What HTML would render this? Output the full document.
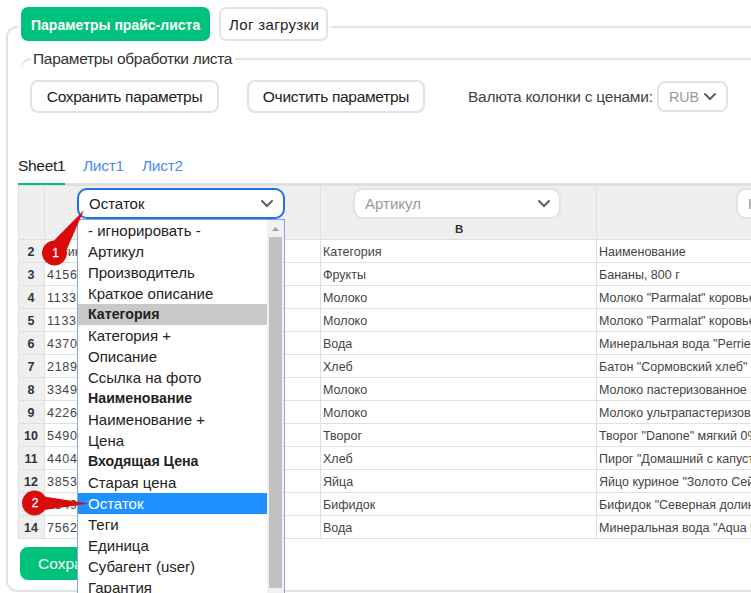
<!DOCTYPE html>
<html><head><meta charset="utf-8">
<style>
*{box-sizing:border-box;margin:0;padding:0}
html,body{width:751px;height:593px;overflow:hidden;background:#fff;font-family:"Liberation Sans",sans-serif;color:#333;position:relative}
.a{position:absolute;white-space:nowrap}
.outer{left:6px;top:26px;width:900px;height:566px;border:2px solid #e2e3e6;border-radius:11px}
.tabmask{left:18px;top:20px;width:313px;height:12px;background:#fff}
.gtab{left:21px;top:7px;width:189px;height:34px;background:#00c27c;border-radius:7px;color:#fff;font-weight:bold;font-size:14px;line-height:36px;padding-left:10px}
.wtab{left:219px;top:7px;width:109px;height:34px;border:2px solid #e2e3e6;border-radius:7px;font-size:15px;letter-spacing:0.35px;line-height:32px;padding-left:8px;color:#222}
.legline{left:235px;top:58px;width:600px;height:2px;background:#e2e3e6}
.legarc{left:20px;top:58px;width:11px;height:11px;border-top:2px solid #dddee2;border-left:2px solid #dddee2;border-top-left-radius:11px;-webkit-mask-image:linear-gradient(to bottom,#000 10%,transparent 95%)}
.legend{left:33px;top:49px;font-size:15.5px;letter-spacing:-0.3px;line-height:20px;color:#333}
.btn{height:33px;border:2px solid #e2e3e6;border-radius:8px;font-size:15.5px;letter-spacing:-0.3px;line-height:29px;color:#222;text-align:center}
.sheet{top:156px;font-size:15.5px;letter-spacing:-0.3px;line-height:20px}
.grid{left:18px;top:183px;width:800px;height:355px}
.cell{position:absolute;font-size:12.5px;line-height:23px;white-space:nowrap;overflow:hidden;color:#444}
.rn{position:absolute;left:18px;width:26px;text-align:center;font-weight:bold;font-size:12.5px;line-height:23px;color:#333}
.dd{left:77px;top:219px;width:208px;height:380px;background:#fff;border:1px solid #7f9fd6;border-right:0}
.item{position:absolute;left:1px;width:189px;height:21px;font-size:15px;line-height:21px;padding-left:10px;color:#222}
.badge{position:absolute;width:25px;height:25px;border-radius:50%;background:#d90b0b;color:#fff;font-size:11px;line-height:25px;text-align:center}
</style></head><body>
<div class="a outer"></div>
<div class="a tabmask"></div>
<div class="a gtab">Параметры прайс-листа</div>
<div class="a wtab">Лог загрузки</div>
<div class="a legarc"></div>
<div class="a legline"></div>
<div class="a legend">Параметры обработки листа</div>
<div class="a btn" style="left:30px;top:80px;width:189px">Сохранить параметры</div>
<div class="a btn" style="left:247px;top:80px;width:178px">Очистить параметры</div>
<div class="a" style="left:468px;top:87px;font-size:15.5px;letter-spacing:-0.25px;line-height:20px;color:#444">Валюта колонки с ценами:</div>
<div class="a btn" style="left:657px;top:81px;width:71px;height:31px;line-height:28px;font-size:14.2px;letter-spacing:0;text-align:left;padding-left:10px;color:#999">RUB</div>
<svg class="a" style="left:703px;top:92px" width="14" height="10"><path d="M2 2 L7 7 L12 2" stroke="#5c5f64" stroke-width="2" stroke-linecap="round" fill="none"/></svg>

<div class="a sheet" style="left:18px;color:#222">Sheet1</div>
<div class="a sheet" style="left:83px;color:#4e8af2">Лист1</div>
<div class="a sheet" style="left:142px;color:#4e8af2">Лист2</div>


<div class="a" style="left:18px;top:183px;width:733px;height:3px;background:#dedfe1"></div>
<div class="a" style="left:18px;top:186px;width:733px;height:53px;background:#efeff0"></div>
<div class="a" style="left:18px;top:239px;width:26px;height:299px;background:#efeff0"></div>
<div class="a" style="left:18px;top:183px;width:47px;height:2px;background:#00c27c"></div>
<div class="a" style="left:18px;top:239px;width:733px;height:1px;background:#e0e0e2"></div>
<div class="a" style="left:18px;top:262px;width:733px;height:1px;background:#e0e0e2"></div>
<div class="a" style="left:18px;top:285px;width:733px;height:1px;background:#e0e0e2"></div>
<div class="a" style="left:18px;top:308px;width:733px;height:1px;background:#e0e0e2"></div>
<div class="a" style="left:18px;top:331px;width:733px;height:1px;background:#e0e0e2"></div>
<div class="a" style="left:18px;top:354px;width:733px;height:1px;background:#e0e0e2"></div>
<div class="a" style="left:18px;top:377px;width:733px;height:1px;background:#e0e0e2"></div>
<div class="a" style="left:18px;top:400px;width:733px;height:1px;background:#e0e0e2"></div>
<div class="a" style="left:18px;top:423px;width:733px;height:1px;background:#e0e0e2"></div>
<div class="a" style="left:18px;top:446px;width:733px;height:1px;background:#e0e0e2"></div>
<div class="a" style="left:18px;top:469px;width:733px;height:1px;background:#e0e0e2"></div>
<div class="a" style="left:18px;top:492px;width:733px;height:1px;background:#e0e0e2"></div>
<div class="a" style="left:18px;top:515px;width:733px;height:1px;background:#e0e0e2"></div>
<div class="a" style="left:18px;top:538px;width:733px;height:1px;background:#e0e0e2"></div>
<div class="a" style="left:18px;top:186px;width:1px;height:352px;background:#e0e0e2"></div>
<div class="a" style="left:44px;top:186px;width:1px;height:352px;background:#e0e0e2"></div>
<div class="a" style="left:320px;top:186px;width:1px;height:352px;background:#e0e0e2"></div>
<div class="a" style="left:596px;top:186px;width:1px;height:352px;background:#e0e0e2"></div>
<div class="rn" style="top:241px">2</div>
<div class="cell" style="left:45px;top:241px;width:275px;padding-left:2px;letter-spacing:0px">Артикул</div>
<div class="cell" style="left:321px;top:241px;width:275px;padding-left:2px">Категория</div>
<div class="cell" style="left:597px;top:241px;width:200px;padding-left:2px">Наименование</div>
<div class="rn" style="top:264px">3</div>
<div class="cell" style="left:45px;top:264px;width:275px;padding-left:2px;letter-spacing:0.7px">4156423</div>
<div class="cell" style="left:321px;top:264px;width:275px;padding-left:2px">Фрукты</div>
<div class="cell" style="left:597px;top:264px;width:200px;padding-left:2px">Бананы, 800 г</div>
<div class="rn" style="top:287px">4</div>
<div class="cell" style="left:45px;top:287px;width:275px;padding-left:2px;letter-spacing:0.7px">1133245</div>
<div class="cell" style="left:321px;top:287px;width:275px;padding-left:2px">Молоко</div>
<div class="cell" style="left:597px;top:287px;width:200px;padding-left:2px">Молоко "Parmalat" коровье ультрапастеризованное</div>
<div class="rn" style="top:310px">5</div>
<div class="cell" style="left:45px;top:310px;width:275px;padding-left:2px;letter-spacing:0.7px">1133246</div>
<div class="cell" style="left:321px;top:310px;width:275px;padding-left:2px">Молоко</div>
<div class="cell" style="left:597px;top:310px;width:200px;padding-left:2px">Молоко "Parmalat" коровье ультрапастеризованное</div>
<div class="rn" style="top:333px">6</div>
<div class="cell" style="left:45px;top:333px;width:275px;padding-left:2px;letter-spacing:0.7px">4370123</div>
<div class="cell" style="left:321px;top:333px;width:275px;padding-left:2px">Вода</div>
<div class="cell" style="left:597px;top:333px;width:200px;padding-left:2px">Минеральная вода "Perrier" газированная</div>
<div class="rn" style="top:356px">7</div>
<div class="cell" style="left:45px;top:356px;width:275px;padding-left:2px;letter-spacing:0.7px">2189345</div>
<div class="cell" style="left:321px;top:356px;width:275px;padding-left:2px">Хлеб</div>
<div class="cell" style="left:597px;top:356px;width:200px;padding-left:2px">Батон "Сормовский хлеб" нарезной</div>
<div class="rn" style="top:379px">8</div>
<div class="cell" style="left:45px;top:379px;width:275px;padding-left:2px;letter-spacing:0.7px">3349876</div>
<div class="cell" style="left:321px;top:379px;width:275px;padding-left:2px">Молоко</div>
<div class="cell" style="left:597px;top:379px;width:200px;padding-left:2px">Молоко пастеризованное 3,2%</div>
<div class="rn" style="top:402px">9</div>
<div class="cell" style="left:45px;top:402px;width:275px;padding-left:2px;letter-spacing:0.7px">4226543</div>
<div class="cell" style="left:321px;top:402px;width:275px;padding-left:2px">Молоко</div>
<div class="cell" style="left:597px;top:402px;width:200px;padding-left:2px">Молоко ультрапастеризованное 1,5%</div>
<div class="rn" style="top:425px">10</div>
<div class="cell" style="left:45px;top:425px;width:275px;padding-left:2px;letter-spacing:0.7px">5490234</div>
<div class="cell" style="left:321px;top:425px;width:275px;padding-left:2px">Творог</div>
<div class="cell" style="left:597px;top:425px;width:200px;padding-left:2px">Творог "Danone" мягкий 0%</div>
<div class="rn" style="top:448px">11</div>
<div class="cell" style="left:45px;top:448px;width:275px;padding-left:2px;letter-spacing:0.7px">4404567</div>
<div class="cell" style="left:321px;top:448px;width:275px;padding-left:2px">Хлеб</div>
<div class="cell" style="left:597px;top:448px;width:200px;padding-left:2px">Пирог "Домашний с капустой"</div>
<div class="rn" style="top:471px">12</div>
<div class="cell" style="left:45px;top:471px;width:275px;padding-left:2px;letter-spacing:0.7px">3853456</div>
<div class="cell" style="left:321px;top:471px;width:275px;padding-left:2px">Яйца</div>
<div class="cell" style="left:597px;top:471px;width:200px;padding-left:2px">Яйцо куриное "Золото Сейм" С1</div>
<div class="rn" style="top:494px">13</div>
<div class="cell" style="left:45px;top:494px;width:275px;padding-left:2px;letter-spacing:0.7px">2349765</div>
<div class="cell" style="left:321px;top:494px;width:275px;padding-left:2px">Бифидок</div>
<div class="cell" style="left:597px;top:494px;width:200px;padding-left:2px">Бифидок "Северная долина" 2,5%</div>
<div class="rn" style="top:517px">14</div>
<div class="cell" style="left:45px;top:517px;width:275px;padding-left:2px;letter-spacing:0.7px">7562345</div>
<div class="cell" style="left:321px;top:517px;width:275px;padding-left:2px">Вода</div>
<div class="cell" style="left:597px;top:517px;width:200px;padding-left:2px">Минеральная вода "Aqua Minerale"</div>
<div class="a" style="left:353px;top:188px;width:208px;height:31px;border:2px solid #e2e2e5;border-radius:10px;background:#fff;font-size:15px;line-height:27px;padding-left:10px;color:#999">Артикул</div>
<svg class="a" style="left:537px;top:199px" width="14" height="10"><path d="M2 2 L7 7 L12 2" stroke="#5c5f64" stroke-width="2" stroke-linecap="round" fill="none"/></svg>
<div class="a" style="left:455px;top:221px;font-size:11.5px;font-weight:bold;line-height:16px;color:#333">B</div>
<div class="a" style="left:736px;top:188px;width:208px;height:31px;border:2px solid #e2e2e5;border-radius:10px;background:#fff;font-size:15px;line-height:27px;padding-left:10px;color:#999">Наименование</div>
<div class="a" style="left:20px;top:547px;width:200px;height:33px;background:#00c27c;border-radius:8px;color:#fff;font-size:15px;line-height:33px;padding-left:18px;font-size:15.5px">Сохранить</div><div class="a" style="left:77px;top:188px;width:208px;height:31px;border:2px solid #1f6fe5;border-radius:10px;background:#fff;font-size:15px;line-height:27px;padding-left:10px;color:#222">Остаток</div>
<svg class="a" style="left:260px;top:199px" width="14" height="10"><path d="M2 2 L7 7 L12 2" stroke="#5c5f64" stroke-width="2" stroke-linecap="round" fill="none"/></svg>
<div class="a" style="left:77px;top:219px;width:208px;height:380px;background:#fff;border:1px solid #8aa6d8"></div>
<div class="a" style="left:78px;top:220px;width:189px;height:21px;font-size:15px;line-height:21px;padding-left:10px;color:#222">- игнорировать -</div>
<div class="a" style="left:78px;top:241px;width:189px;height:21px;font-size:15px;line-height:21px;padding-left:10px;color:#222">Артикул</div>
<div class="a" style="left:78px;top:262px;width:189px;height:21px;font-size:15px;line-height:21px;padding-left:10px;color:#222">Производитель</div>
<div class="a" style="left:78px;top:283px;width:189px;height:21px;font-size:15px;line-height:21px;padding-left:10px;color:#222">Краткое описание</div>
<div class="a" style="left:78px;top:304px;width:189px;height:21px;font-size:15px;line-height:21px;padding-left:10px;color:#222;font-weight:bold;font-size:14.2px;background:#c9c9c9">Категория</div>
<div class="a" style="left:78px;top:325px;width:189px;height:21px;font-size:15px;line-height:21px;padding-left:10px;color:#222">Категория +</div>
<div class="a" style="left:78px;top:346px;width:189px;height:21px;font-size:15px;line-height:21px;padding-left:10px;color:#222">Описание</div>
<div class="a" style="left:78px;top:367px;width:189px;height:21px;font-size:15px;line-height:21px;padding-left:10px;color:#222">Ссылка на фото</div>
<div class="a" style="left:78px;top:388px;width:189px;height:21px;font-size:15px;line-height:21px;padding-left:10px;color:#222;font-weight:bold;font-size:14.2px">Наименование</div>
<div class="a" style="left:78px;top:409px;width:189px;height:21px;font-size:15px;line-height:21px;padding-left:10px;color:#222">Наименование +</div>
<div class="a" style="left:78px;top:430px;width:189px;height:21px;font-size:15px;line-height:21px;padding-left:10px;color:#222">Цена</div>
<div class="a" style="left:78px;top:451px;width:189px;height:21px;font-size:15px;line-height:21px;padding-left:10px;color:#222;font-weight:bold;font-size:14.2px">Входящая Цена</div>
<div class="a" style="left:78px;top:472px;width:189px;height:21px;font-size:15px;line-height:21px;padding-left:10px;color:#222">Старая цена</div>
<div class="a" style="left:78px;top:493px;width:189px;height:21px;font-size:15px;line-height:21px;padding-left:10px;color:#222;background:#1e90ff;color:#fff">Остаток</div>
<div class="a" style="left:78px;top:514px;width:189px;height:21px;font-size:15px;line-height:21px;padding-left:10px;color:#222">Теги</div>
<div class="a" style="left:78px;top:535px;width:189px;height:21px;font-size:15px;line-height:21px;padding-left:10px;color:#222">Единица</div>
<div class="a" style="left:78px;top:556px;width:189px;height:21px;font-size:15px;line-height:21px;padding-left:10px;color:#222">Субагент (user)</div>
<div class="a" style="left:78px;top:577px;width:189px;height:21px;font-size:15px;line-height:21px;padding-left:10px;color:#222">Гарантия</div>
<div class="a" style="left:267px;top:220px;width:17px;height:373px;background:#f1f1f1"></div>
<div class="a" style="left:269px;top:237px;width:13px;height:351px;background:#c1c1c1"></div>
<svg class="a" style="left:269px;top:224px" width="14" height="9"><path d="M2.8 7 L6.5 3 L10.2 7 Z" fill="#a3a3a3"/></svg>
<svg class="a" style="left:0;top:0" width="751" height="593"><path d="M 53 241.5 L 83.8 210.3 L 66.5 250 Z" fill="#d90b0b"/><circle cx="54.5" cy="253" r="12.5" fill="#d90b0b"/><path d="M 44 496.5 L 88.5 503.6 L 44 510 Z" fill="#d90b0b"/><circle cx="34.5" cy="503" r="12.5" fill="#d90b0b"/></svg>
<div class="a" style="left:43px;top:241px;width:25px;height:25px;text-align:center;color:#fff;font-size:12px;line-height:25px;-webkit-text-stroke:0.3px #fff">1</div>
<div class="a" style="left:22.5px;top:491px;width:25px;height:25px;text-align:center;color:#fff;font-size:12px;line-height:25px;-webkit-text-stroke:0.3px #fff">2</div></body></html>
